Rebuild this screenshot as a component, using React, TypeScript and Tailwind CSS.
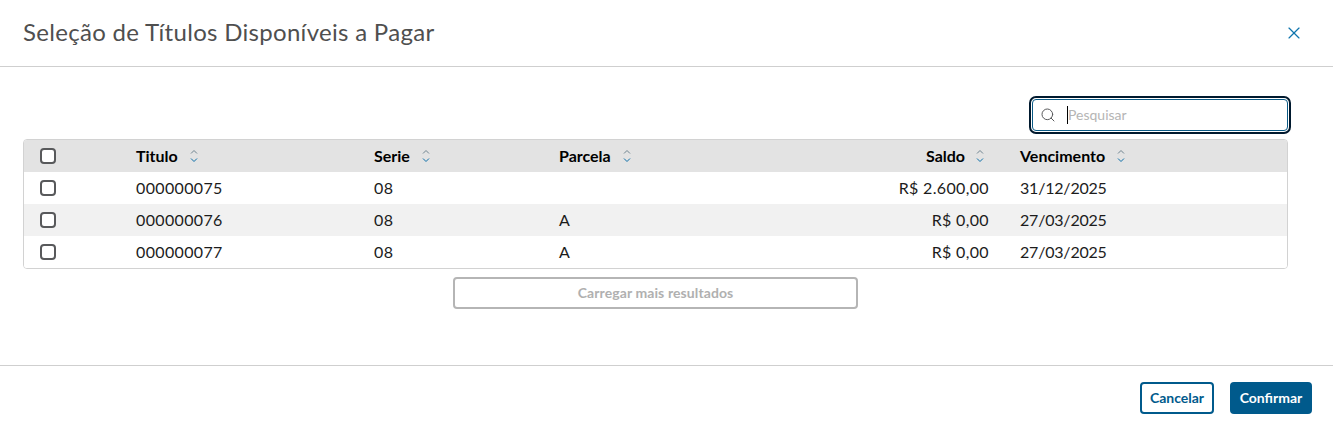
import { Search, X } from 'lucide-react'

const rows = [
	{ titulo: '000000075', serie: '08', parcela: '', saldo: 'R$ 2.600,00', vencimento: '31/12/2025' },
	{ titulo: '000000076', serie: '08', parcela: 'A', saldo: 'R$ 0,00', vencimento: '27/03/2025' },
	{ titulo: '000000077', serie: '08', parcela: 'A', saldo: 'R$ 0,00', vencimento: '27/03/2025' },
]

function SortIcon() {
	return (
		<svg width="10" height="16" viewBox="0 0 10 16" fill="none">
			<path d="M2 5.5 L5 2.5 L8 5.5" stroke="#6f8490" strokeWidth="1" />
			<path d="M2 10.5 L5 13.5 L8 10.5" stroke="#0b6ea8" strokeWidth="1" />
		</svg>
	)
}

function Checkbox() {
	return <span className="block w-4 h-4 rounded-[4px] border-2 border-[#58595b] bg-white" />
}

const gridCols = 'grid grid-cols-[96px_238px_185px_231px_231px_282px]'

export default function App() {
	return (
		<div className="w-[1333px] h-[428px] bg-white overflow-hidden font-['Lato',sans-serif]">
			<header className="h-[67px] border-b border-[#cfcfcf] flex items-center justify-between pl-[23px] pr-[29px]">
				<h1 className="text-[24px] text-[#4f4f4f] leading-[32px] -mt-[3px] tracking-[0.3px]">Seleção de Títulos Disponíveis a Pagar</h1>
				<X size={20} strokeWidth={1.4} className="text-[#0f75ad]" />
			</header>

			<main className="h-[298px] pl-[23px] pt-[32px]">
				<div className="w-[1265px]">
					<div className="flex justify-end mb-[8px]">
						<div className="w-[256px] h-[32px] rounded-[4px] border border-[#0b5a85] outline-2 outline-offset-1 outline-[#00192e] flex items-center pl-[7px]">
							<Search size={16} strokeWidth={1.5} className="text-[#58595b]" />
							<span className="ml-[11px] h-[18px] w-px bg-black" />
							<span className="text-sm text-[#b5b5b5]">Pesquisar</span>
						</div>
					</div>

					<div className="border border-[#d2d2d2] rounded-[4px] overflow-hidden text-[16px] tracking-[0.35px] text-[#1c1c1c]">
						<div className={`${gridCols} h-[32px] items-center bg-[#e3e3e3] font-bold tracking-normal text-black`}>
							<div className="pl-4"><Checkbox /></div>
							<div className="pl-4 pb-px flex items-center gap-[11px]">Titulo <SortIcon /></div>
							<div className="pl-4 pb-px flex items-center gap-[11px]">Serie <SortIcon /></div>
							<div className="pl-4 pb-px flex items-center gap-[11px]">Parcela <SortIcon /></div>
							<div className="pr-[20px] pb-px flex items-center justify-end gap-[10px]">Saldo <SortIcon /></div>
							<div className="pl-[15px] pb-px flex items-center gap-[11px]">Vencimento <SortIcon /></div>
						</div>
						{rows.map((row, i) => (
							<div key={row.titulo} className={`${gridCols} h-[32px] items-center ${i === 1 ? 'bg-[#f1f1f1]' : 'bg-white'}`}>
								<div className="pl-4"><Checkbox /></div>
								<div className="pl-4">{row.titulo}</div>
								<div className="pl-4">{row.serie}</div>
								<div className="pl-4">{row.parcela}</div>
								<div className="pr-4 text-right">{row.saldo}</div>
								<div className="pl-[15px] tracking-[-0.2px]">{row.vencimento}</div>
							</div>
						))}
					</div>

					<div className="flex justify-center mt-[8px]">
						<button className="w-[405px] h-[32px] rounded-[4px] border-2 border-[#b5b5b5] bg-white text-sm tracking-[0.1px] font-bold text-[#b0b0b0]">
							Carregar mais resultados
						</button>
					</div>
				</div>
			</main>

			<footer className="border-t border-[#cfcfcf] flex justify-end gap-4 pt-[16px] pr-[21px]">
				<button className="w-[74px] h-[32px] rounded-[4px] border-2 border-[#005a8c] bg-white text-sm font-bold text-[#005a8c]">Cancelar</button>
				<button className="w-[82px] h-[32px] rounded-[4px] bg-[#005a8c] text-sm font-bold text-white">Confirmar</button>
			</footer>
		</div>
	)
}
